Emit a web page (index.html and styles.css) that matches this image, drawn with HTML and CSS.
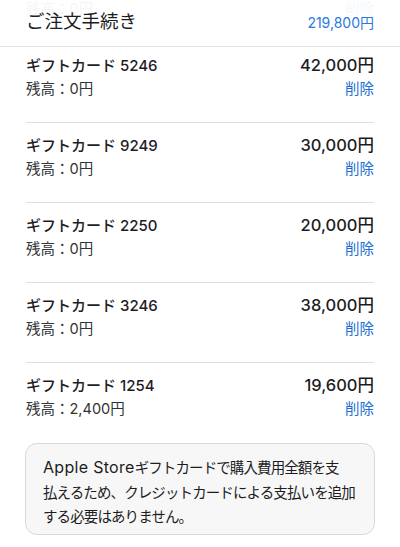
FILE: index.html
```html
<!DOCTYPE html>
<html lang="ja">
<head>
<meta charset="utf-8">
<link rel="stylesheet" href="styles.css">
</head>
<body>
<div class="page">
  <div class="list">
    <div class="item">
      <div class="row title-row"><span class="name">ギフトカード 8246</span><span class="amount">10,200円</span></div>
      <div class="row sub-row"><span class="balance">残高：0円</span><span class="remove">削除</span></div>
    </div>
    <div class="item">
      <div class="row title-row"><span class="name">ギフトカード 5246</span><span class="amount">42,000円</span></div>
      <div class="row sub-row"><span class="balance">残高：0円</span><span class="remove">削除</span></div>
    </div>
    <div class="item">
      <div class="row title-row"><span class="name">ギフトカード 9249</span><span class="amount">30,000円</span></div>
      <div class="row sub-row"><span class="balance">残高：0円</span><span class="remove">削除</span></div>
    </div>
    <div class="item">
      <div class="row title-row"><span class="name">ギフトカード 2250</span><span class="amount">20,000円</span></div>
      <div class="row sub-row"><span class="balance">残高：0円</span><span class="remove">削除</span></div>
    </div>
    <div class="item">
      <div class="row title-row"><span class="name">ギフトカード 3246</span><span class="amount">38,000円</span></div>
      <div class="row sub-row"><span class="balance">残高：0円</span><span class="remove">削除</span></div>
    </div>
    <div class="item">
      <div class="row title-row"><span class="name">ギフトカード 1254</span><span class="amount">19,600円</span></div>
      <div class="row sub-row"><span class="balance">残高：2,400円</span><span class="remove">削除</span></div>
    </div>
  </div>
  <div class="notice"><span class="latin">Apple Store</span>ギフトカードで購入費用全額を支<br>払えるため、クレジットカードによる支払いを追加<br>する必要はありません。</div>
  <div class="header">
    <span class="header-title">ご注文手続き</span>
    <span class="header-total">219,800円</span>
  </div>
</div>
</body>
</html>
```

FILE: styles.css
```css
html, body {
  margin: 0;
  padding: 0;
  background: #ffffff;
}
body {
  font-family: Inter, "Noto Sans CJK JP", "Noto Sans", sans-serif;
  color: #1d1d1f;
}
.page {
  position: relative;
  width: 400px;
  height: 547px;
  overflow: hidden;
}
.header {
  position: absolute;
  top: 0;
  left: 0;
  right: 0;
  height: 46px;
  padding: 0 26px;
  display: flex;
  justify-content: space-between;
  align-items: baseline;
  background: rgba(255, 255, 255, 0.95);
  border-bottom: 1px solid #e2e2e2;
}
.header-title {
  font-size: 18.5px;
  line-height: 42px;
  font-weight: 400;
  color: #1d1d1f;
}
.header-total {
  font-size: 14px;
  color: #2a7ae2;
}
.list {
  margin-top: -38px;
  padding: 0 26px;
}
.item {
  padding: 12px 0 21px;
  border-top: 1px solid #dedede;
}
.item:first-child {
  border-top: none;
  padding-top: 13px;
}
.row {
  display: flex;
  justify-content: space-between;
  align-items: baseline;
  overflow: visible;
}
.title-row {
  height: 21px;
  line-height: 21px;
}
.sub-row {
  height: 25px;
  line-height: 25px;
}
.name {
  font-size: 15px;
  font-weight: 500;
  color: #1d1d1f;
}
.amount {
  font-size: 16.5px;
  font-weight: 500;
  color: #1d1d1f;
}
.balance {
  font-size: 14.5px;
  color: #333333;
}
.remove {
  font-size: 14.5px;
  color: #1b6fd2;
}
.notice {
  margin: 1px 25px 0;
  padding: 11px 8px 4px 17px;
  border: 1px solid #d9d9d9;
  border-radius: 12px;
  background: #f7f7f7;
  font-size: 14.5px;
  line-height: 24.5px;
  letter-spacing: -0.9px;
  color: #1d1d1f;
  white-space: nowrap;
}
.latin {
  font-size: 16px;
  letter-spacing: 0.3px;
}
```
